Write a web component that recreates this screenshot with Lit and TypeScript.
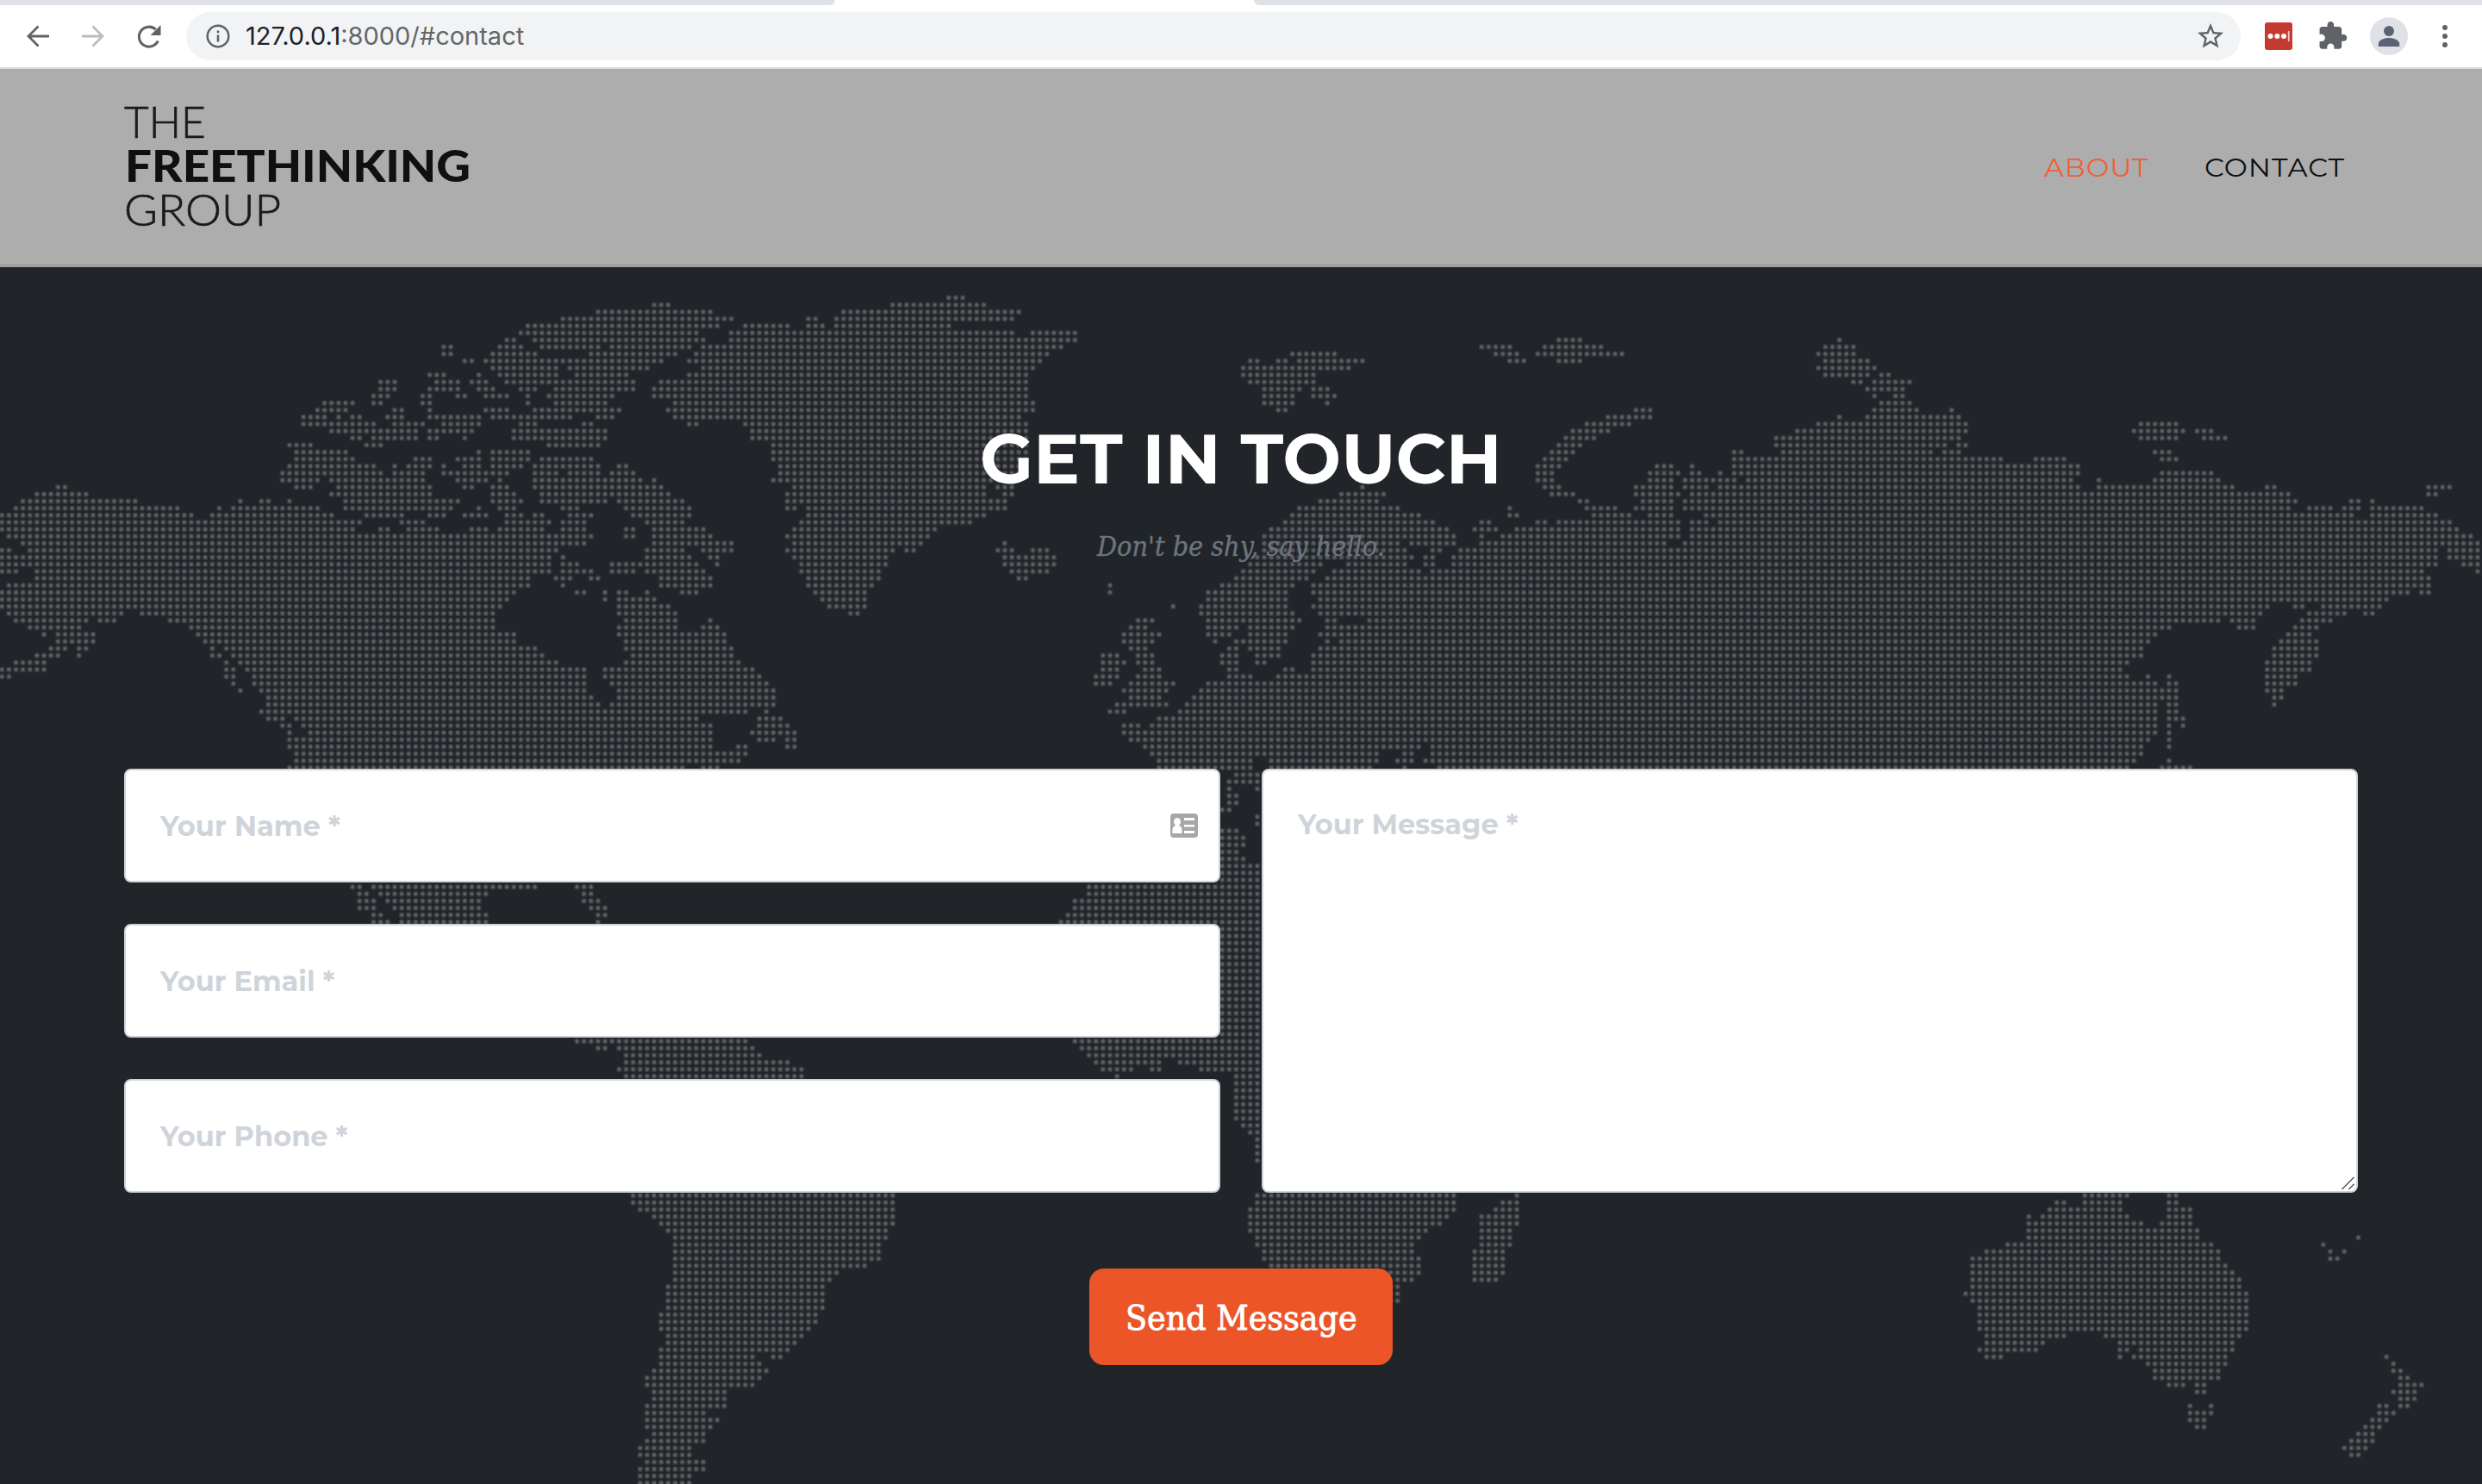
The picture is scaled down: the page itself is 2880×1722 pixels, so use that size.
import { LitElement, html, svg, css } from "lit";
import { customElement, property } from "lit/decorators.js";

const PITCH = 8.138;
const COL0 = 2.2;
const ROW0 = 345.6;

/** One sheet of the dotted map: rows of "start-end" runs, measured from the sheet's origin at its own scale. */
interface Sheet {
  origin: number;
  scale: number;
  rows: string;
}

const SHEETS: Sheet[] = [
  {
    origin: 0,
    scale: 1.6333,
    rows: `1:1236-1272
2:1130-1352
3:1063-1392
4:995-1365 1409-1480
5:982-1326 1382-1480
6:956-980 1009-1339 1382-1480
7:942-993 1022-1139 1155-1312 1328-1480
8:929-1020 1115-1286 1315-1480
9:876-900 916-1259 1301-1480
7:836-860
8:836-860
10:929-1060 1075-1232 1328-1480
11:810-847 903-914 942-1060 1088-1193 1301-1480
12:716-754 823-873 889-928 956-1206 1248-1480
13:716-754 810-873 903-940 982-1020 1048-1206 1235-1480
14:703-741 797-820 863-887 916-967 995-1007 1035-1166 1235-1480
15:610-674 703-727 797-820 995-1007 1048-1152 1275-1480
16:597-661 743-767 810-820 916-967 1009-1179 1262-1480
17:570-621 637-648 663-687 730-768 810-914 929-1087 1128-1166 1275-1480
18:570-714 743-807 836-914 982-1020 1102-1126 1301-1325 1409-1480
19:624-794 810-900 969-1152 1421-1480
20:663-687 703-794 810-834 876-887 969-1152 1421-1480
21:544-595 690-727 1035-1139 1461-1480
22:557-661 903-914 929-1007 1461-1480
23:557-674 783-820 863-914 929-1007 1022-1126 1461-1480
24:544-714 743-754 769-820 836-847 876-914 929-993 1009-1139 1168-1193
25:530-727 743-807 836-967 1009-1060 1075-1139 1155-1206
26:530-608 624-807 863-927 942-954 1009-1219 1235-1246 1461-1480
27:105-129 557-595 637-820 876-900 929-967 1009-1259
28:66-169 624-820 929-980 1022-1272
29:39-263 450-461 490-515 544-555 650-873 929-993 1022-1152 1168-1299
30:25-343 411-422 437-608 650-860 903-914 942-980 1062-1099 1182-1312
31:0-368 397-635 690-768 810-847 876-927 956-993 1009-1033 1075-1126 1195-1312
32:0-688 757-807 956-1046 1062-1112 1222-1299
33:0-674 716-741 769-834 889-927 942-1033 1062-1112 1182-1206 1235-1339
34:12-1126 1182-1206 1235-1352
35:39-1112 1235-1392
36:0-23 52-1060 1222-1299 1328-1392
37:0-1046 1062-1073 1222-1312 1341-1365
38:0-1046 1062-1099 1155-1325 1354-1365
39:0-36 66-1046 1062-1126 1155-1206 1222-1339
40:66-1007 1048-1086 1115-1139 1248-1352
41:12-1007 1062-1073 1248-1352
42:0-980 1088-1112 1142-1153 1168-1193 1222-1233 1288-1325
43:0-967 1142-1153 1168-1246
44:0-954 1168-1272
45:12-236 265-940 1168-1286
46:25-169 185-222 318-940 1182-1286 1341-1352
47:52-156 358-940 1168-1286 1328-1365
48:78-90 105-183 371-980 1168-1379
49:105-183 384-980 1182-1379
50:92-129 145-169 397-408 424-1020 1182-1392
51:66-116 145-156 397-421 437-1033 1195-1392
52:25-90 424-435 450-1060 1182-1405
53:0-90 424-448 464-1112 1142-1431
54:0-23 424-448 477-1112 1142-1445
55:437-448 477-1112 1155-1458
56:450-461 490-1112 1168-1471
57:503-1126 1168-1471
58:503-1139 1155-1471
59:490-1418 1447-1458
60:503-541 557-1325 1434-1485
61:530-555 570-1352 1434-1498
62:544-555 583-1352 1421-1511
63:544-1352 1434-1471 1487-1511
64:544-1352 1394-1418 1487-1511
65:557-1418
66:557-1405
67:544-1299 1328-1365`,
  },
  {
    origin: 900,
    scale: 1.6333,
    rows: `0:323-360
1:217-400
2:124-466
3:58-82 111-453
4:0-27 58-95 111-334
5:0-453 482-573
6:0-573 1480-1529
7:0-547 1333-1397 1453-1568
8:0-520 975-1065 1360-1411 1440-1568
9:0-506 895-919 948-971 988-1118 1386-1423 1480-1529
10:0-493 882-1091
11:0-480 882-1025
12:0-480 895-1025
13:0-480 920-998 1015-1052
14:0-480 920-985 1015-1065
15:0-493 920-985 1041-1052
16:0-493 948-971
17:0-467
18:0-480 1533-1568
19:0-480 1506-1568
20:0-480 1493-1558
21:0-480 1480-1530
22:0-480 1466-1516
23:0-480 1453-1503
24:2-467 1440-1490
25:2-467 1440-1477
26:0-453 1440-1477
27:32-400 416-453 1108-1119 1453-1490
28:18-400 430-453 1067-1158 1466-1516
29:18-440 1027-1146 1520-1543
30:18-42 58-440 988-1186 1386-1397 1533-1568
31:58-400 975-1226 1386-1411 1546-1568
32:45-374 960-1252 1333-1357 1440-1464 1480-1568
33:32-307 934-1279 1320-1370 1400-1568
34:18-294 920-1292 1333-1344 1373-1568
35:32-281 430-440 920-1186 1200-1292 1333-1568
36:18-228 243-267 416-453 482-520 920-1199 1240-1264 1292-1568
37:32-215 430-533 907-1212 1226-1252 1280-1568
38:45-215 430-533 895-1038 1080-1199 1226-1252 1280-1568
39:45-201 443-520 882-1025 1055-1226 1240-1568
40:58-201 456-480 868-1012 1041-1568
41:58-188 628-640 841-985 1015-1568
42:72-175 628-640 815-972 1015-1568
43:84-175 815-972 1027-1568
44:98-175 748-759 801-972 1015-1568
45:137-161 801-985 1027-1568
46:682-719 815-998 1041-1065 1118-1568
47:668-705 815-880 895-985 1041-1568
48:655-732 815-868 895-972 1027-1568
49:655-719 828-840 868-972 1041-1052 1067-1568
50:668-705 855-880 895-960 1027-1568
51:615-653 682-719 841-880 907-960 1015-1568
52:615-666 682-719 841-880 907-933 1015-1568
53:615-653 695-732 855-880 960-985 1015-1568
54:602-653 682-732 855-907 948-1568
55:602-640 668-759 815-1568
56:655-745 801-1568
57:668-732 788-1568
58:642-745 775-1568
59:628-665 762-1568
60:722-1568
61:655-694 708-1568
62:655-1568
63:668-1568
64:695-1226 1240-1568
65:708-1146 1186-1212 1240-1568
66:722-907 934-1146 1173-1212 1226-1568
67:722-907 934-1133 1186-1199 1253-1568`,
  },
  {
    origin: 1800,
    scale: 3,
    rows: `6:18-110
7:0-183
8:0-256
9:18-110
16:286-355
17:188-355
18:116-280
19:66-208
20:42-158
21:18-110
22:0-86
23:0-60
24:0-36 358-430 480-502
25:0-12 335-453 480-526 578-600
26:0-12 335-430 457-600
27:0-36 286-430 457-550 578-600
28:0-86 286-453 480-600
29:91-134 310-430 457-600
30:116-232 286-430 457-600
31:140-281 335-430 530-600
32:18-453 480-550 578-600
33:0-453 480-600
34:0-453 480-600
35:0-405 457-600
36~67:0-600`,
  },
  {
    origin: 1920,
    scale: 1.6333,
    rows: `6:345-356
7:318-383
8:305-383
9:318-409
10:305-422
11:318-409 424-449
12:371-395 411-489
13:398-475
14:411-422 451-475
15:424-489
16:411-500 557-568
17:345-356 398-581
18:305-595 916-993
19:265-595 903-1006 1022-1060
20:225-581 916-993 1036-1087
21:225-555 570-595
22:145-170 238-528 543-581 943-980
23:145-661 716-780 956-993
24:0-38 65-77 145-807
25:0-50 65-90 119-130 145-807 956-1060
26:0-38 52-156 171-794 836-847 943-1073
27:0-38 52-103 119-807 836-1100 1155-1180 1461-1511
28:0-50 65-1206 1461-1485
29:0-38 52-1219 1315-1338 1354-1365
30:0-38 52-1206 1235-1286 1301-1338 1354-1458
31:0-38 92-1325 1354-1485
32:0-50 65-103 119-1511
33:0-50 65-1525
34:0-50 65-1551
35:0-23 52-1568
36:0-1485 1500-1568
37:0-1485 1500-1568
38:0-1485 1527-1568
39:0-1460 1554-1568
40:0-1471
41:0-1471
42:0-1431 1447-1471
43:0-1392
44:0-1166 1208-1233 1262-1379
45:0-1153 1235-1312 1341-1365
46:0-1073 1088-1139 1222-1286
47:0-980 1102-1139 1208-1259
48:0-954 1195-1246
49:0-940 1182-1259
50:0-927 1168-1259
51:0-927 1168-1259
52:0-900 1155-1246
53:0-887 1155-1246
54:0-900 930-941 969-980 1155-1219
55:0-954 969-993 1155-1219
56:0-993 1155-1193
57:0-993 1168-1193
58:0-954 969-993 1168-1180
59:0-954 969-993
60:0-954 969-1006
61:0-954 969-980 996-1006
62:0-954 969-980
63:0-940 969-980
64:0-927 969-980
65:0-927
66:0-914 969-980
67:0-900 956-1020`,
  },
  {
    origin: 1240,
    scale: 3,
    rows: `68:576-672
69:551-672
70:551-568 648-672
71:551-592
72:551-592
73:528-568
74:648-672
75:648-672
76:528-592
77:528-617
78:528-617
79:528-592
80:528-617
81~83:528-672`,
  },
  {
    origin: 140,
    scale: 3,
    rows: `84:799-843 872-1453
85:823-867 896-1282
86:823-892 920-1257
87:823-892 945-1257
88:872-916 970-1282
89:872-941 970-1282`,
  },
  {
    origin: 600,
    scale: 1.7422,
    rows: `84:2-42 117-157 1152-1505
85:131-157 1152-1505
86:131-170 1124-1505
87:145-184 1124-1505
88:160-184 1110-1505
89:160-171 1095-1505
90~105:1421-1505
106:117-468 1124-1505
107:160-184 202-482 1138-1505
108:216-497 1152-1505
109:216-553 1166-1304 1336-1505
110:202-581 1180-1247 1279-1304 1378-1505
111:216-581 1208-1219 1449-1505
112~117:1449-1505
118:1463-1505
119:1477-1505
120~123:1491-1505
128:230-766
129:230-766
130:245-766
131:273-766
132:287-766
133:301-752
134:315-752
135:315-738
136:315-738
137:315-738
138:315-709
139:315-652
140:315-638
141~144:301-624
145:287-610
146:287-610
147:287-595
148:301-581
149:301-567
150:287-553
151:287-482 514-539
152:287-497
153:273-510
154:259-497
155:259-482
156:273-426
157:273-426
158:259-426
159:259-383
160:259-411
161:259-397
162:273-383
163:259-383
164:245-355
165:245-355
166:259-383
167:245-383
168:245-355
169:245-355`,
  },
  {
    origin: 1080,
    scale: 2.24,
    rows: `128:842-1366 1517-1530
129:842-1366 1481-1530
130:824-1366 1463-1530
131:824-1348 1426-1530
132:824-1330 1426-1530
133:824-1293 1426-1511
134:842-1275 1426-1511
135:842-1257 1426-1511
136:860-1257 1408-1493
137:860-1275 1408-1493
138:879-1275 1408-1493
139:879-1275 1408-1493
140:1150-1257 1408-1475
141~143:1190-1220`,
  },
  {
    origin: 2200,
    scale: 2.3059,
    rows: `128:500-624 725-755
129:425-456 500-605 725-755
130:406-605 725-795
131:350-361 387-624 725-795
132:350-661 706-795
133:350-812
134:350-812 1232-1243
135:293-849 1138-1149
136:237-868 1157-1168 1194-1206
137:200-868 1157-1187
138:200-887
139:200-905
140:200-924
141:200-924
142:181-943
143:200-943
144~147:218-943
148:237-456 556-924
149:237-400 594-905
150:218-381 594-624 650-905
151:237-287 594-605 632-887 1307-1318
152:669-887 1326-1337
153:687-868 1326-1356
154:687-868 1344-1375
155:725-775 800-831 1344-1412
156:800-831 1326-1393
157:1344-1393
158:781-793 838-849 1288-1318 1344-1375
159:781-849 1288-1337
160:781-831 1270-1318
161:800-831 1251-1300
162:1232-1281
163:1213-1281
164:1194-1262
165:1213-1243`,
  },
];

function buildDots(): string {
  const rows = new Map<number, Set<number>>();
  for (const { origin, scale, rows: text } of SHEETS) {
    for (const line of text.split("\n")) {
      const [key, runs] = line.trim().split(":");
      const [first, last = first] = key.split("~").map(Number);
      for (let r = first; r <= last; r++) {
        const cells = rows.get(r) ?? new Set<number>();
        rows.set(r, cells);
        for (const run of runs.split(" ")) {
          const [a, b] = run.split("-").map((v) => origin + Number(v) / scale);
          const from = Math.max(0, Math.ceil((a - 0.9 - COL0) / PITCH));
          const to = Math.floor((b + 0.9 - COL0) / PITCH);
          for (let c = from; c <= to; c++) cells.add(c);
        }
      }
    }
  }
  let d = "";
  for (const [r, cells] of rows) {
    const y = (ROW0 + r * PITCH).toFixed(2);
    const sorted = [...cells].sort((p, q) => p - q);
    for (let i = 0; i < sorted.length; ) {
      let j = i;
      while (j + 1 < sorted.length && sorted[j + 1] === sorted[j] + 1) j++;
      const x1 = COL0 + sorted[i] * PITCH;
      const x2 = COL0 + sorted[j] * PITCH + 0.2;
      d += `M${x1.toFixed(2)} ${y}H${x2.toFixed(2)}`;
      i = j + 1;
    }
  }
  return d;
}

const DOTS = buildDots();

/** Text stretched horizontally to an exact width. */
@customElement("fit-text")
export class FitText extends LitElement {
  @property({ type: Number }) width = 100;
  static styles = css`
    :host { display: block; white-space: nowrap; }
    .t { display: inline-block; transform-origin: 0 50%; }
  `;
  render() {
    return html`<span class="t"><slot></slot></span>`;
  }
  async firstUpdated() {
    this.style.width = `${this.width}px`;
    const fit = () => {
      const span = this.renderRoot.querySelector<HTMLElement>(".t")!;
      const w = span.offsetWidth;
      if (w) span.style.transform = `scaleX(${this.width / w})`;
    };
    fit();
    await document.fonts.ready;
    fit();
  }
}

@customElement("world-map")
export class WorldMap extends LitElement {
  static styles = css`
    :host { display: block; }
    svg { display: block; }
    .halo { stroke: #4a4c50; stroke-width: 7; opacity: 0.5; }
    .core { stroke: #5c5d61; stroke-width: 4.2; }
    path { fill: none; stroke-linecap: round; stroke-dasharray: 0 8.138; }
  `;
  render() {
    return html`<svg width="2880" height="1412" viewBox="0 310 2880 1412">
      ${svg`<path class="halo" d=${DOTS}></path><path class="core" d=${DOTS}></path>`}
    </svg>`;
  }
}

@customElement("browser-bar")
export class BrowserBar extends LitElement {
  static styles = css`
    :host { display: block; background: #fff; }
    svg { display: block; flex: none; }
    .tabs { display: flex; height: 6px; justify-content: space-between; }
    .left { width: 969px; background: #dee1e6; border-bottom-right-radius: 6px; }
    .right { width: 1425px; background: #dee1e6; border-bottom-left-radius: 6px; }
    .bar { display: flex; align-items: center; height: 72px; padding-left: 24px; }
    .line { height: 2px; background: #dadada; }
    .nav { display: flex; gap: 24px; margin-right: 24px; }
    .omni {
      display: flex; align-items: center; width: 2384px; height: 56px; box-sizing: border-box;
      border-radius: 28px; background: #f1f3f4; padding: 0 17px 0 22px;
    }
    .url {
      flex: 1; margin-left: 17px; font: 28px/40px Inter, "Liberation Sans", sans-serif; color: #646669;
    }
    .url b { font-weight: 400; color: #202124; }
    .ext { display: flex; align-items: center; margin-left: 24px; gap: 23px; }
  `;
  render() {
    return html`
      <div class="tabs"><div class="left"></div><div class="right"></div></div>
      <div class="bar">
        <div class="nav">
          <svg width="40" height="40" viewBox="0 0 40 40" fill="none" stroke="#5f6368" stroke-width="2.8">
            <path d="M33 20H9M20.5 8.5 9 20l11.500 11.500"></path>
          </svg>
          <svg width="40" height="40" viewBox="0 0 40 40" fill="none" stroke="#babcbe" stroke-width="2.8">
            <path d="M7 20h24M19.500 8.500 31 20 19.500 31.500"></path>
          </svg>
          <svg width="40" height="40" viewBox="0 0 40 40">
            <path d="M31.300 25.500a11.500 11.500 0 1 1-2.600-13.300" fill="none" stroke="#5f6368" stroke-width="3"></path>
            <path d="M34.500 7v12h-12z" fill="#5f6368"></path>
          </svg>
        </div>
        <div class="omni">
          <svg width="30" height="30" viewBox="0 0 30 30">
            <circle cx="15" cy="15" r="12.300" fill="none" stroke="#5f6368" stroke-width="2.500"></circle>
            <path d="M13.700 13.500h2.600v8h-2.600zM13.700 8.500h2.600v2.700h-2.600z" fill="#5f6368"></path>
          </svg>
          <div class="url"><fit-text width="323"><b>127.0.0.1</b>:8000/#contact</fit-text></div>
          <svg width="36" height="36" viewBox="0 0 24 24" fill="#5f6368">
            <path d="M22 9.240l-7.190-.62L12 2 9.190 8.630 2 9.240l5.460 4.730L5.820 21 12 17.270 18.180 21l-1.630-7.030L22 9.240zM12 15.400l-3.760 2.270 1-4.280-3.320-2.880 4.380-.38L12 6.100l1.710 4.040 4.380.38-3.320 2.880 1 4.280L12 15.400z"></path>
          </svg>
        </div>
        <div class="ext">
          <svg width="40" height="40" viewBox="0 0 40 40">
            <rect x="4" y="4" width="32" height="32" rx="3" fill="#c53a30"></rect>
            <g fill="#fff"><circle cx="10.500" cy="20" r="3"></circle><circle cx="18.300" cy="20" r="3"></circle><circle cx="26" cy="20" r="3"></circle></g>
            <path d="M31.700 14v12" stroke="#f3c7c3" stroke-width="1.800"></path>
          </svg>
          <svg width="40" height="40" viewBox="-1 -1 26.500 26.500" fill="#5f6368">
            <path d="M20.500 11H19V7c0-1.100-.9-2-2-2h-4V3.500C13 2.120 11.880 1 10.500 1S8 2.120 8 3.500V5H4c-1.100 0-1.990.9-1.990 2v3.800H3.500c1.490 0 2.700 1.210 2.700 2.700s-1.210 2.700-2.700 2.700H2V20c0 1.100.9 2 2 2h3.800v-1.500c0-1.490 1.210-2.700 2.700-2.700 1.490 0 2.700 1.210 2.700 2.700V22H17c1.100 0 2-.9 2-2v-4h1.500c1.380 0 2.500-1.120 2.500-2.500S21.880 11 20.500 11z"></path>
          </svg>
          <svg width="44" height="44" viewBox="0 0 44 44">
            <circle cx="22" cy="22" r="22" fill="#dfe1e6"></circle>
            <circle cx="22" cy="16" r="6" fill="#5b6273"></circle>
            <path d="M9.800 34v-3.500c0-4 7-6.600 12.200-6.600s12.200 2.600 12.200 6.600V34z" fill="#5b6273"></path>
          </svg>
          <svg width="40" height="40" viewBox="0 0 40 40" fill="#5f6368">
            <circle cx="20" cy="10" r="3"></circle><circle cx="20" cy="20" r="3"></circle><circle cx="20" cy="30" r="3"></circle>
          </svg>
        </div>
      </div>
      <div class="line"></div>
    `;
  }
}

@customElement("app-root")
export class AppRoot extends LitElement {
  static styles = css`
    :host { display: block; width: 2880px; height: 1722px; overflow: hidden; background: #212529; }
    svg { display: block; }
    .header {
      display: flex; justify-content: space-between; align-items: center; box-sizing: border-box;
      height: 230px; padding: 0 159px 0 144px; background: #adadad; border-bottom: 4px solid #a1a1a1;
    }
    .logo { display: flex; flex-direction: column; padding-bottom: 3px; font-family: Lato, "Open Sans", sans-serif; font-size: 51px; line-height: 51px; color: #1a1a1a; }
    .light { font-weight: 300; -webkit-text-stroke: 0.700px #1a1a1a; }
    .heavy { font-weight: 900; color: #101010; padding-left: 1px; }
    .nav { display: flex; gap: 65px; padding-top: 3px; font: 400 30.400px/40px Montserrat, Inter, sans-serif; letter-spacing: 1px; color: #101010; }
    .on { color: #f05f38; }
    .contact { position: relative; height: 1412px; }
    .map { position: absolute; inset: 0; }
    .inner { position: relative; display: flex; flex-direction: column; align-items: center; padding: 173px 144px 0; }
    .title { font: 700 80px/100px Montserrat, Inter, sans-serif; color: #fff; }
    .sub { margin-top: 29px; font: italic 32px/44px "Roboto Slab", "DejaVu Serif", serif; color: #6c757d; -webkit-text-stroke: 0.400px #6c757d; }
    .form { display: grid; grid-template-columns: 1fr 1fr; gap: 48px; width: 100%; height: 492px; margin-top: 236px; }
    .col { display: flex; flex-direction: column; gap: 48px; }
    .field {
      display: flex; justify-content: space-between; align-items: center; box-sizing: border-box; height: 132px;
      padding: 0 24px 0 40px; border: 2px solid #ced4da; border-radius: 8px; background: #fff;
      font: 700 32px/48px Montserrat, Inter, sans-serif; color: #ced4da;
    }
    .field fit-text { padding-top: 1px; }
    .area { position: relative; height: 492px; align-items: flex-start; padding-top: 38px; }
    .grip { position: absolute; right: 0; bottom: 0; }
    .send {
      display: flex; align-items: center; justify-content: center; width: 352px; height: 112px; margin-top: 88px;
      border-radius: 17px; background: #ec5528; color: #fff; font: 39px/60px "Roboto Slab", "DejaVu Serif", serif;
      -webkit-text-stroke: 0.900px #fff;
    }
    .send fit-text { padding-top: 3px; }
  `;
  render() {
    return html`
      <browser-bar></browser-bar>
      <div class="header">
        <div class="logo">
          <fit-text class="light" width="95">THE</fit-text>
          <fit-text class="heavy" width="401">FREETHINKING</fit-text>
          <fit-text class="light" width="182">GROUP</fit-text>
        </div>
        <div class="nav">
          <fit-text class="on" width="121">ABOUT</fit-text>
          <fit-text width="163">CONTACT</fit-text>
        </div>
      </div>
      <div class="contact">
        <world-map class="map"></world-map>
        <div class="inner">
          <fit-text class="title" width="606">GET IN TOUCH</fit-text>
          <fit-text class="sub" width="334">Don't be shy, say hello.</fit-text>
          <div class="form">
            <div class="col">
              <div class="field">
                <fit-text width="209">Your Name *</fit-text>
                <svg width="32" height="28" viewBox="0 0 32 28">
                  <rect width="32" height="28" rx="4" fill="#a7a7a7"></rect>
                  <g fill="#fff">
                    <ellipse cx="8" cy="9.500" rx="4" ry="4.500"></ellipse>
                    <path d="M2.500 23v-4c0-3.500 2.500-5.500 5.500-5.500s5.500 2 5.500 5.500v4z"></path>
                    <path d="M16 5h12v3H16zM16 13h12v2.500H16zM16 20h12v3H16z"></path>
                  </g>
                </svg>
              </div>
              <div class="field"><fit-text width="203">Your Email *</fit-text></div>
              <div class="field"><fit-text width="218">Your Phone *</fit-text></div>
            </div>
            <div class="field area">
              <fit-text width="256">Your Message *</fit-text>
              <svg class="grip" width="18" height="18" viewBox="0 0 18 18" stroke="#555" stroke-width="1.500">
                <path d="M1.500 16 15.500 2M9.500 16l6-6"></path>
              </svg>
            </div>
          </div>
          <div class="send"><fit-text width="269">Send Message</fit-text></div>
        </div>
      </div>
    `;
  }
}
